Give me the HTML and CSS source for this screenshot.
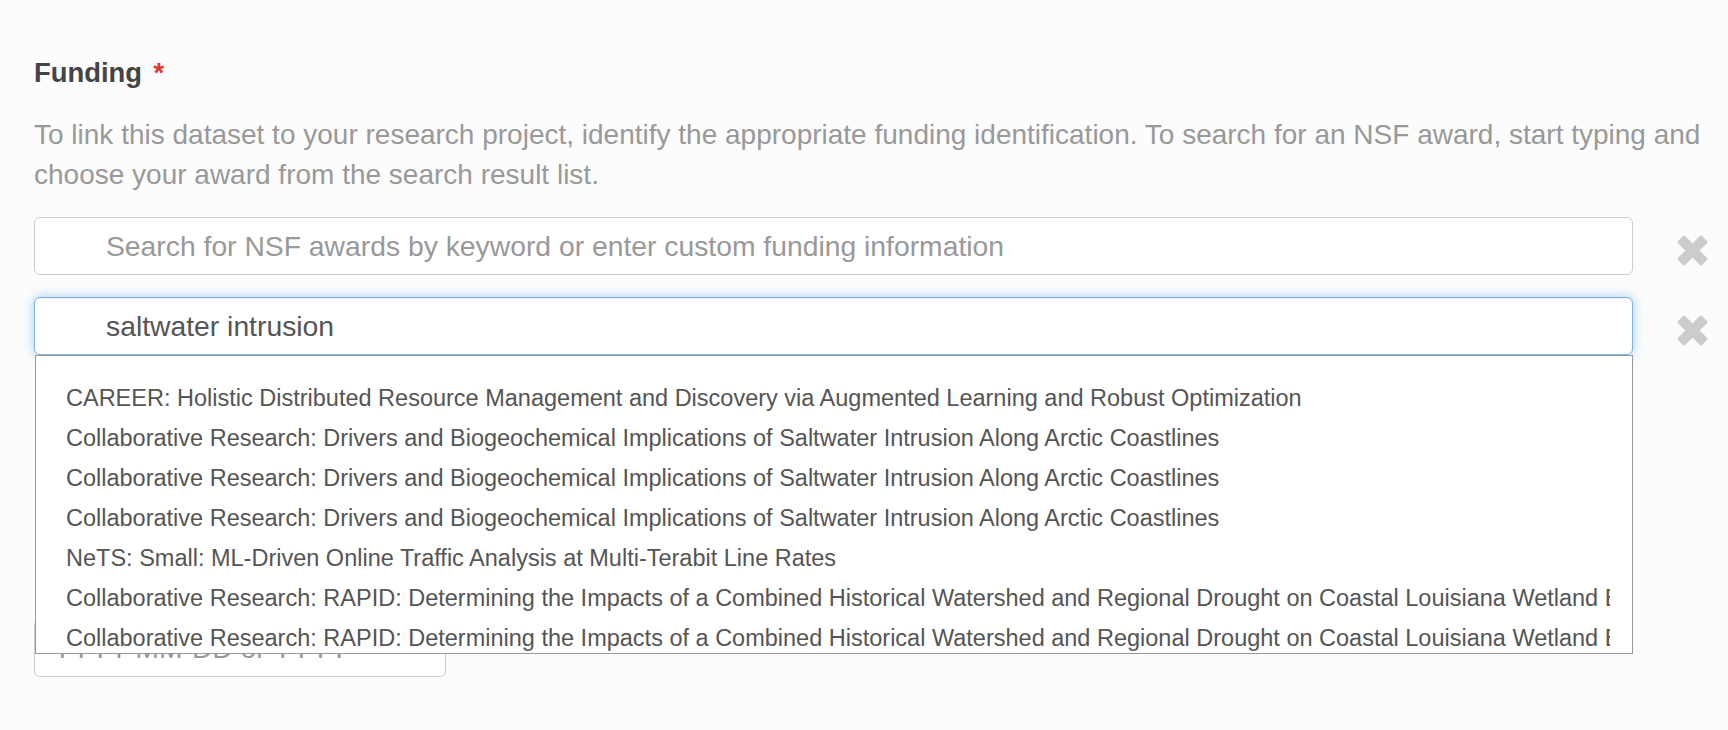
FILE: index.html
```html
<!DOCTYPE html>
<html lang="en">
<head>
<meta charset="utf-8">
<title>Funding</title>
<link rel="stylesheet" href="styles.css">
</head>
<body>
<main class="form">
  <section class="field">
    <h2 class="field-label">Funding <span class="required">*</span></h2>
    <p class="field-help">To link this dataset to your research project, identify the appropriate funding identification. To search for an NSF award, start typing and choose your award from the search result list.</p>
    <div class="funding-row">
      <div class="search-box">
        <input class="text-input" type="text" placeholder="Search for NSF awards by keyword or enter custom funding information">
      </div>
      <button class="remove-btn" type="button" aria-label="Remove">
        <svg class="remove-icon" viewBox="0 0 31 31" width="31" height="31" aria-hidden="true">
          <rect x="-1.5" y="10.5" width="34" height="10" rx="1.6" transform="rotate(45 15.5 15.5)"/>
          <rect x="-1.5" y="10.5" width="34" height="10" rx="1.6" transform="rotate(-45 15.5 15.5)"/>
        </svg>
      </button>
    </div>
    <div class="funding-row">
      <div class="search-box">
        <input class="text-input is-focused" type="text" value="saltwater intrusion">
        <div class="results">
          <ul class="results-list">
            <li>CAREER: Holistic Distributed Resource Management and Discovery via Augmented Learning and Robust Optimization</li>
            <li>Collaborative Research: Drivers and Biogeochemical Implications of Saltwater Intrusion Along Arctic Coastlines</li>
            <li>Collaborative Research: Drivers and Biogeochemical Implications of Saltwater Intrusion Along Arctic Coastlines</li>
            <li>Collaborative Research: Drivers and Biogeochemical Implications of Saltwater Intrusion Along Arctic Coastlines</li>
            <li>NeTS: Small: ML-Driven Online Traffic Analysis at Multi-Terabit Line Rates</li>
            <li>Collaborative Research: RAPID: Determining the Impacts of a Combined Historical Watershed and Regional Drought on Coastal Louisiana Wetland Ecosystems</li>
            <li>Collaborative Research: RAPID: Determining the Impacts of a Combined Historical Watershed and Regional Drought on Coastal Louisiana Wetland Ecosystems</li>
          </ul>
        </div>
      </div>
      <button class="remove-btn" type="button" aria-label="Remove">
        <svg class="remove-icon" viewBox="0 0 31 31" width="31" height="31" aria-hidden="true">
          <rect x="-1.5" y="10.5" width="34" height="10" rx="1.6" transform="rotate(45 15.5 15.5)"/>
          <rect x="-1.5" y="10.5" width="34" height="10" rx="1.6" transform="rotate(-45 15.5 15.5)"/>
        </svg>
      </button>
    </div>
  </section>
  <section class="field field-date">
    <input class="text-input date-input" type="text" placeholder="YYYY-MM-DD or YYYY">
  </section>
</main>
</body>
</html>
```
FILE: styles.css
```css
* {
  box-sizing: border-box;
}

html, body {
  margin: 0;
  background: #fcfcfc;
}

body {
  font-family: "Liberation Sans", Arial, Helvetica, sans-serif;
  color: #555;
}

.form {
  padding: 54px 20px 0 34px;
}

.field-label {
  margin: 0;
  font-size: 27.4px;
  line-height: 38.4px;
  font-weight: bold;
  color: #444;
}

.required {
  color: #e3342f;
  margin-left: 4px;
}

.field-help {
  margin: 22.5px 0 0;
  font-size: 28px;
  line-height: 40px;
  color: #999;
}

.funding-row {
  display: flex;
  gap: 44px;
  margin-top: 22px;
}

.field-help + .funding-row {
  margin-top: 22.5px;
}

.search-box {
  flex: 1;
  position: relative;
}

.text-input {
  display: block;
  width: 100%;
  height: 58px;
  padding: 0 12px 0 71px;
  font-family: "Liberation Sans", Arial, Helvetica, sans-serif;
  font-size: 28.3px;
  color: #555;
  background: #fff;
  border: 1px solid #ccc;
  border-radius: 6px;
  outline: none;
}

.text-input::placeholder {
  color: #999;
  opacity: 1;
}

.text-input.is-focused {
  border-color: #7db4ea;
  box-shadow: inset 0 1px 1px rgba(0, 0, 0, 0.075), 0 0 12px rgba(102, 175, 233, 0.6);
}

.remove-btn {
  width: 31px;
  padding: 9px 0 0;
  margin: 0;
  border: 0;
  background: none;
  display: flex;
  align-items: center;
  justify-content: center;
  cursor: pointer;
}

.remove-icon {
  display: block;
  fill: #cccccc;
}

.results {
  position: absolute;
  top: 100%;
  left: 1px;
  right: 0;
  height: 299px;
  overflow: hidden;
  background: #fff;
  border: 1px solid #999;
  z-index: 10;
  padding-top: 22px;
}

.results-list {
  list-style: none;
  margin: 0 22px 0 30px;
  padding: 0;
  overflow: hidden;
}

.results-list li {
  white-space: nowrap;
  font-size: 23.5px;
  line-height: 40px;
  color: #555;
}

.field-date {
  margin-top: 264px;
}

.date-input {
  width: 412px;
  padding-left: 18px;
}
```
